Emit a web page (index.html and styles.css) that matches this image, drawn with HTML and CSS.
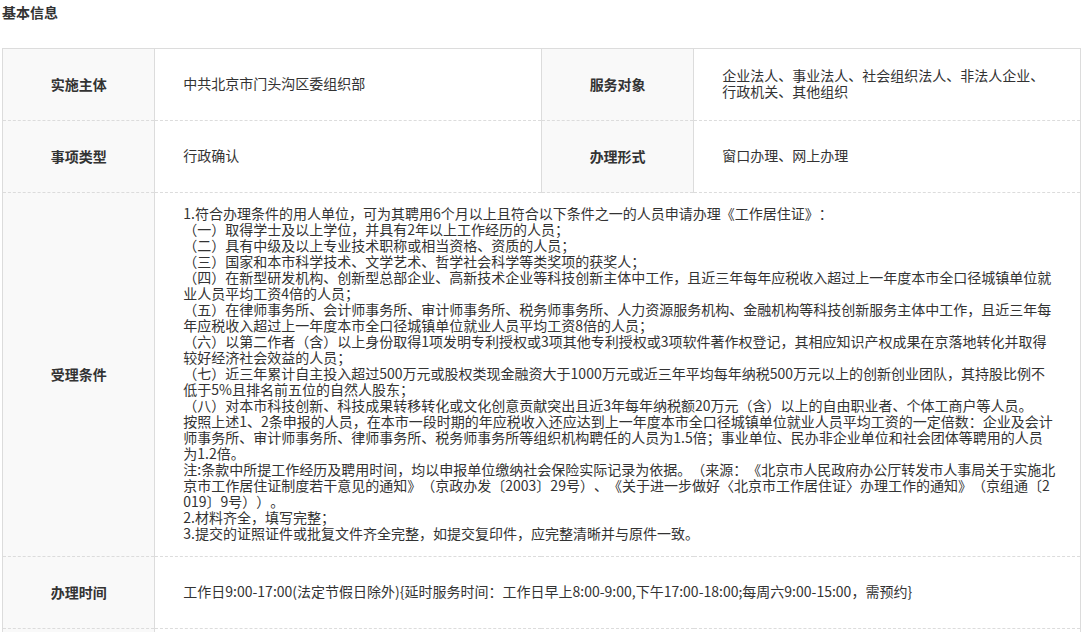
FILE: index.html
```html
<!DOCTYPE html>
<html lang="zh-CN">
<head>
<meta charset="utf-8">
<title>基本信息</title>
<link rel="stylesheet" href="styles.css">
</head>
<body>
<div class="page">
  <h2 class="section-title">基本信息</h2>
  <table class="info-table">
    <colgroup>
      <col class="col-label">
      <col class="col-value">
      <col class="col-label">
      <col class="col-value">
    </colgroup>
    <tbody>
      <tr>
        <th class="label">实施主体</th>
        <td class="value">中共北京市门头沟区委组织部</td>
        <th class="label">服务对象</th>
        <td class="value">企业法人、事业法人、社会组织法人、非法人企业、行政机关、其他组织</td>
      </tr>
      <tr>
        <th class="label">事项类型</th>
        <td class="value">行政确认</td>
        <th class="label">办理形式</th>
        <td class="value">窗口办理、网上办理</td>
      </tr>
      <tr>
        <th class="label">受理条件</th>
        <td class="value value-long" colspan="3">1.符合办理条件的用人单位，可为其聘用6个月以上且符合以下条件之一的人员申请办理《工作居住证》：<br>（一）取得学士及以上学位，并具有2年以上工作经历的人员；<br>（二）具有中级及以上专业技术职称或相当资格、资质的人员；<br>（三）国家和本市科学技术、文学艺术、哲学社会科学等类奖项的获奖人；<br>（四）在新型研发机构、创新型总部企业、高新技术企业等科技创新主体中工作，且近三年每年应税收入超过上一年度本市全口径城镇单位就业人员平均工资4倍的人员；<br>（五）在律师事务所、会计师事务所、审计师事务所、税务师事务所、人力资源服务机构、金融机构等科技创新服务主体中工作，且近三年每年应税收入超过上一年度本市全口径城镇单位就业人员平均工资8倍的人员；<br>（六）以第二作者（含）以上身份取得1项发明专利授权或3项其他专利授权或3项软件著作权登记，其相应知识产权成果在京落地转化并取得较好经济社会效益的人员；<br>（七）近三年累计自主投入超过500万元或股权类现金融资大于1000万元或近三年平均每年纳税500万元以上的创新创业团队，其持股比例不低于5%且排名前五位的自然人股东；<br>（八）对本市科技创新、科技成果转移转化或文化创意贡献突出且近3年每年纳税额20万元（含）以上的自由职业者、个体工商户等人员。<br>按照上述1、2条申报的人员，在本市一段时期的年应税收入还应达到上一年度本市全口径城镇单位就业人员平均工资的一定倍数：企业及会计师事务所、审计师事务所、律师事务所、税务师事务所等组织机构聘任的人员为1.5倍；事业单位、民办非企业单位和社会团体等聘用的人员为1.2倍。<br>注:条款中所提工作经历及聘用时间，均以申报单位缴纳社会保险实际记录为依据。（来源：《北京市人民政府办公厅转发市人事局关于实施北京市工作居住证制度若干意见的通知》（京政办发〔2003〕29号）、《关于进一步做好〈北京市工作居住证〉办理工作的通知》（京组通〔2019〕9号））。<br>2.材料齐全，填写完整；<br>3.提交的证照证件或批复文件齐全完整，如提交复印件，应完整清晰并与原件一致。</td>
      </tr>
      <tr>
        <th class="label">办理时间</th>
        <td class="value" colspan="3">工作日9:00-17:00(法定节假日除外){延时服务时间：工作日早上8:00-9:00,下午17:00-18:00;每周六9:00-15:00，需预约}</td>
      </tr>
      <tr>
        <th class="label">办理地点</th>
        <td class="value" colspan="3">北京市门头沟区</td>
      </tr>
    </tbody>
  </table>
</div>
</body>
</html>
```

FILE: styles.css
```css
html, body {
  margin: 0;
  padding: 0;
  overflow: hidden;
  background: #fff;
}

body {
  font-family: "Noto Sans CJK SC", "Microsoft YaHei", sans-serif;
  font-size: 14px;
  color: #333;
  text-spacing-trim: space-all;
}

.page {
  padding: 0 2px;
}

.section-title {
  margin: 0;
  font-size: 14px;
  font-weight: bold;
  line-height: 24px;
  color: #333;
}

.info-table {
  margin-top: 24px;
  width: 1079px;
  border-collapse: collapse;
  table-layout: fixed;
  border: 1px solid #dcdcdc;
}

.col-label { width: 152px; }
.col-value { width: 386px; }

.info-table tr + tr > th,
.info-table tr + tr > td {
  border-top: 1px dashed #dcdcdc;
}

.label {
  height: 72px;
  background: #f9f9f9;
  font-weight: bold;
  line-height: 16px;
  text-align: center;
  vertical-align: middle;
  border-left: 1px solid #dcdcdc;
  border-right: 1px solid #dcdcdc;
  padding: 0 10px 2px;
  box-sizing: border-box;
}

.value {
  height: 72px;
  padding: 12px 24px 15px 28px;
  line-height: 16px;
  text-align: left;
  vertical-align: middle;
  word-break: break-all;
  box-sizing: border-box;
}
```
